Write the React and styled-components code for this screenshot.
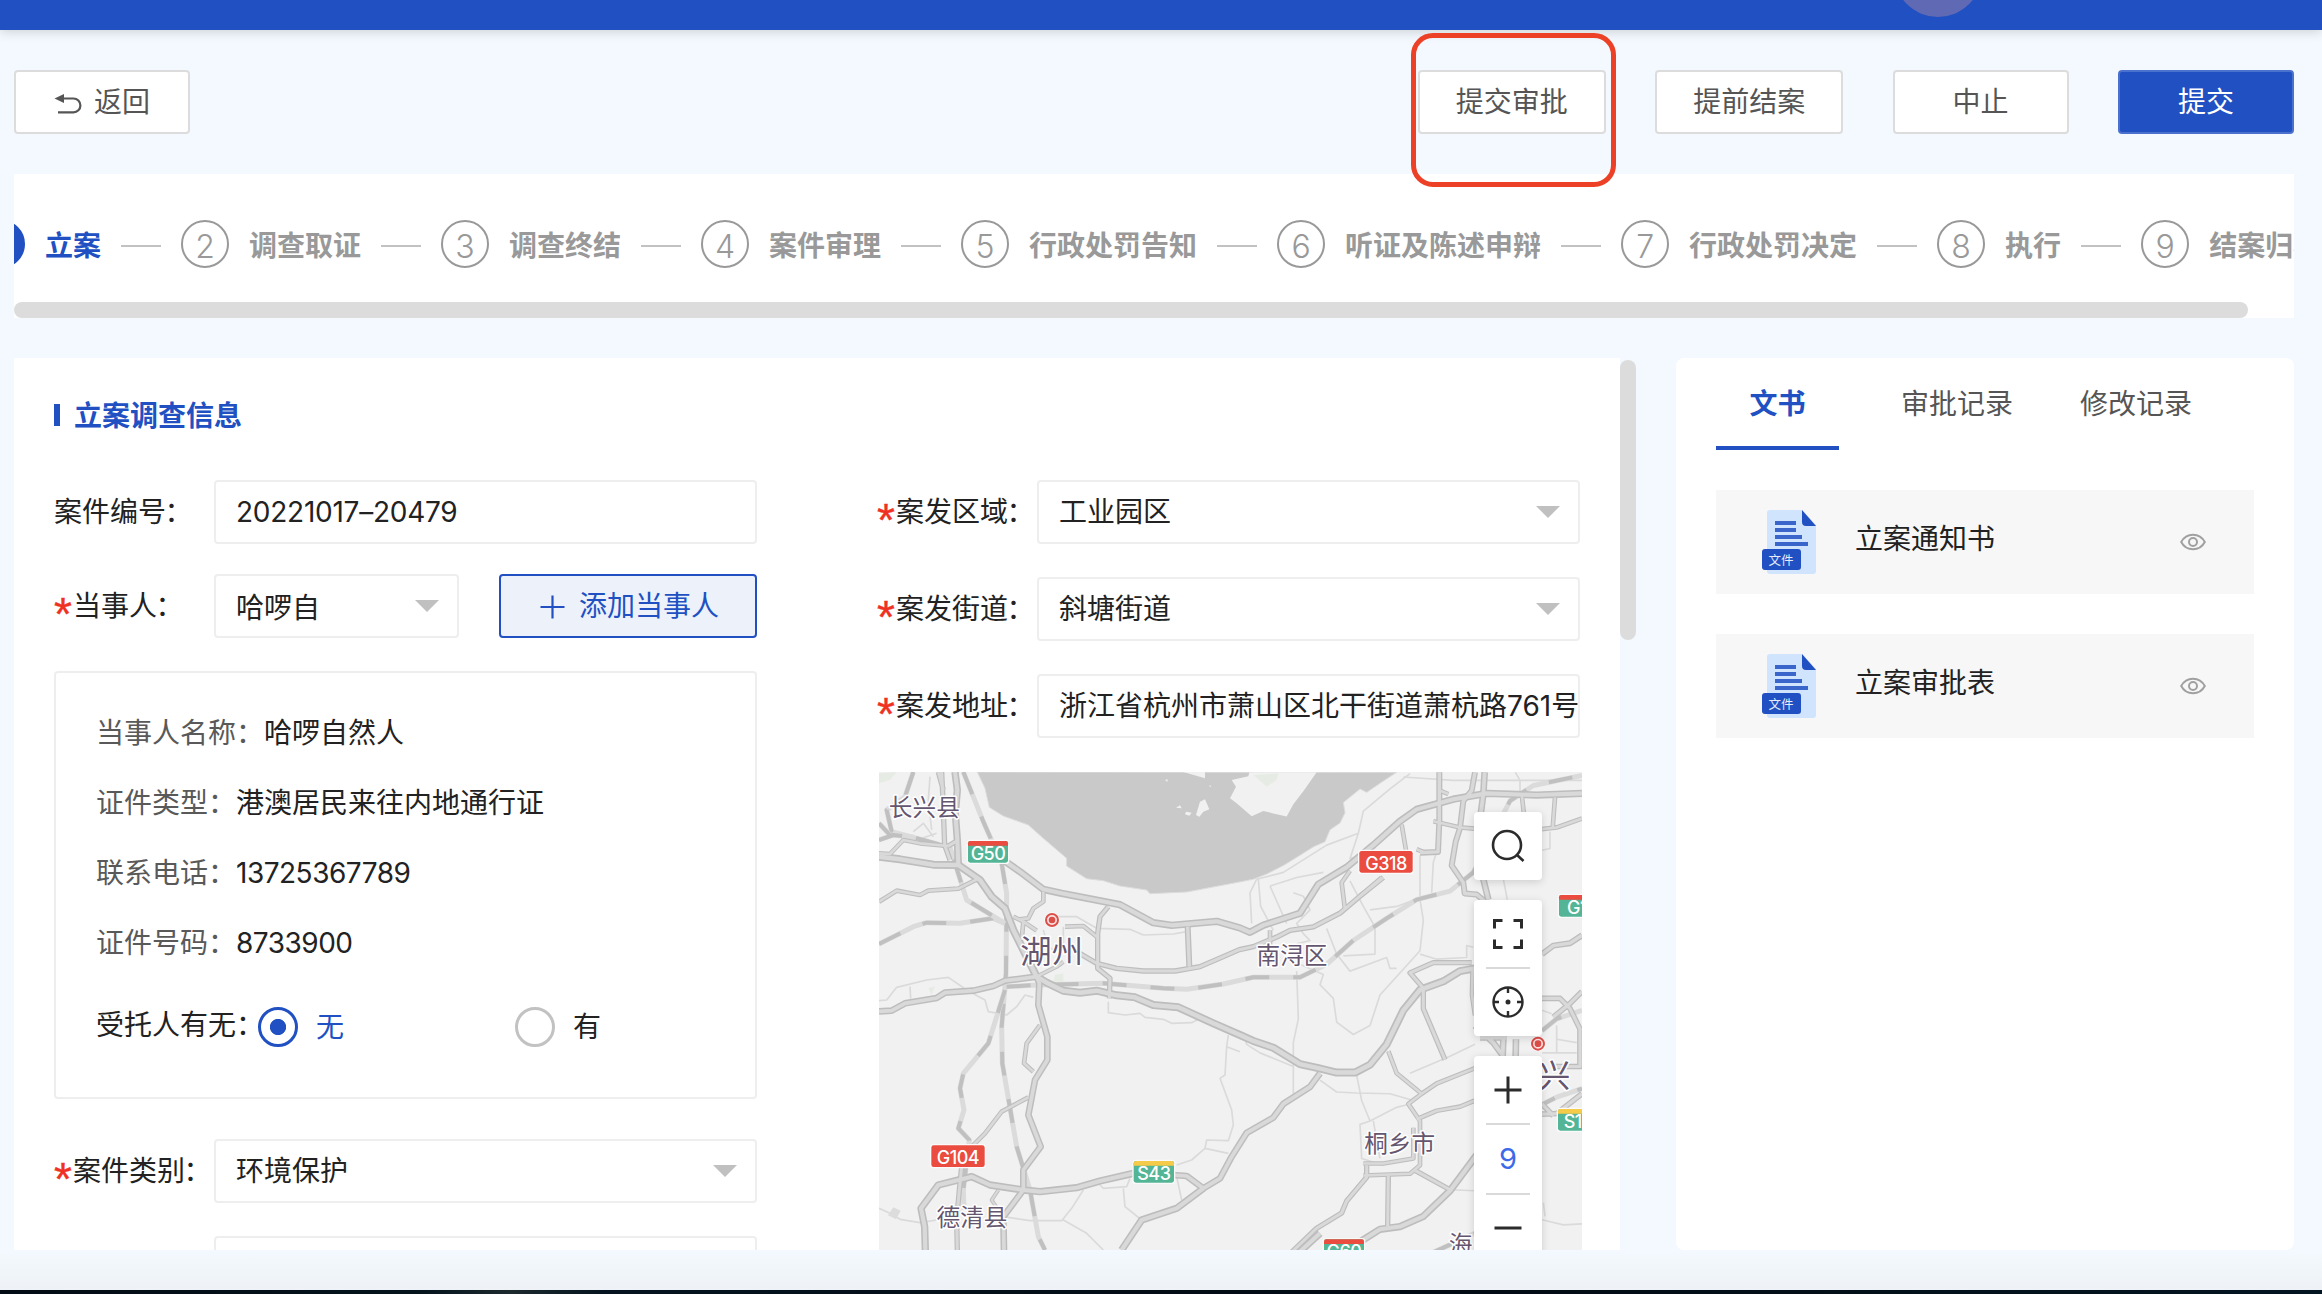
import React from "react";
import styled, { createGlobalStyle, css } from "styled-components";

const BLUE = "#2050c2";
const LINE = "#eeeeee";

const Global = createGlobalStyle`
  *, *::before { box-sizing: border-box; }
  body {
    margin: 0;
    background: #f3f9fe;
    font-family: Inter, "Noto Sans CJK SC", sans-serif;
    font-size: 28px;
    line-height: 40px;
    color: #222;
    overflow: hidden;
  }
`;

const Page = styled.div`
  display: flex;
  flex-direction: column;
  width: 2322px;
  height: 1294px;
  overflow: hidden;
`;

const TopBar = styled.header`
  flex: none;
  position: relative;
  height: 30px;
  background: ${BLUE};
  box-shadow: 0 2px 12px rgba(0, 0, 0, 0.16);
`;

const AvatarClip = styled.div`
  height: 30px;
  overflow: hidden;
  padding-left: 1894px;
`;

const Avatar = styled.div`
  width: 88px;
  height: 88px;
  margin-top: -71px;
  border-radius: 50%;
  background: #5f69b4;
`;

const Toolbar = styled.div`
  flex: none;
  display: flex;
  align-items: center;
  height: 144px;
  padding: 0 28px 0 14px;
`;

const Actions = styled.div`
  display: flex;
  gap: 49.4px;
  margin-left: auto;
`;

const Button = styled.button`
  position: relative;
  display: flex;
  align-items: center;
  justify-content: center;
  gap: 12px;
  width: ${(p) => p.$width || 176}px;
  height: 64px;
  padding: 0;
  border: 2px solid #dcdcdc;
  border-radius: 4px;
  background: #fff;
  color: #555;
  font: inherit;
  ${(p) =>
    p.$primary &&
    css`
      border-color: #4a71cd;
      background: ${BLUE};
      color: #fff;
    `}
`;

const Highlight = styled.span`
  position: absolute;
  left: -9px;
  top: -39px;
  width: 205px;
  height: 154px;
  border: 5px solid #ec4126;
  border-radius: 22px;
`;

const StepsPanel = styled.nav`
  flex: none;
  display: flex;
  flex-direction: column;
  justify-content: space-between;
  width: 2280px;
  height: 144px;
  margin-left: 14px;
  background: #fff;
  overflow: hidden;
`;

const StepTrack = styled.div`
  display: flex;
  align-items: center;
  gap: 20px;
  height: 128px;
  padding-top: 16px;
  margin-left: -37px;
`;

const StepNumber = styled.span`
  flex: none;
  width: 48px;
  height: 48px;
  margin-bottom: 4px;
  border: 2px solid ${(p) => (p.$active ? BLUE : "#999")};
  border-radius: 50%;
  background: ${(p) => (p.$active ? BLUE : "#fff")};
  color: ${(p) => (p.$active ? "#fff" : "#999")};
  font: 300 32px/49px Inter, sans-serif;
  text-align: center;
`;

const StepText = styled.span`
  flex: none;
  font-weight: 600;
  white-space: nowrap;
  color: ${(p) => (p.$active ? BLUE : "#999")};
`;

const StepLine = styled.span`
  flex: none;
  width: 40px;
  height: 2px;
  background: #c2c2c2;
`;

const HScroll = styled.div`
  width: 2234px;
  height: 16px;
  border-radius: 8px;
  background: #dcdcdc;
`;

const Main = styled.main`
  flex: none;
  display: flex;
  height: 892px;
  margin: 40px 28px 0 14px;
`;

const FormPanel = styled.section`
  width: 1606px;
  height: 892px;
  padding: 0 40px;
  background: #fff;
  overflow: hidden;
`;

const VScroll = styled.div`
  width: 16px;
  height: 280px;
  margin-top: 2px;
  border-radius: 8px;
  background: #dcdcdc;
`;

const SectionTitle = styled.h2`
  display: flex;
  align-items: center;
  gap: 14px;
  height: 40px;
  margin: 38px 0 44px;
  font-size: 28px;
  font-weight: 600;
  color: ${BLUE};
  &::before {
    content: "";
    width: 6px;
    height: 22px;
    margin-top: -2px;
    background: ${BLUE};
  }
`;

const Columns = styled.div`
  display: flex;
  justify-content: space-between;
`;

const Column = styled.div`
  display: flex;
  flex-direction: column;
  gap: ${(p) => p.$gap}px;
  width: 703px;
`;

const Field = styled.div`
  display: flex;
  align-items: center;
  height: 64px;
  flex: none;
`;

const Label = styled.label`
  display: flex;
  align-items: center;
  flex: none;
  width: 160px;
  white-space: nowrap;
`;

const Colon = styled.span`
  margin-left: -1.5px;
`;

const Star = styled.span`
  width: 19px;
  height: 40px;
  font: 46px/56px "Liberation Sans", sans-serif;
  letter-spacing: -1px;
  color: #ef3124;
  -webkit-text-stroke: 0.4px #ef3124;
`;

const Control = styled.div`
  display: flex;
  align-items: center;
  justify-content: space-between;
  width: ${(p) => p.$width || 543}px;
  height: 64px;
  padding: ${(p) => p.$drop || 0}px 18px 0 20px;
  border: 2px solid ${LINE};
  border-radius: 4px;
  background: #fff;
  white-space: nowrap;
  overflow: hidden;
  letter-spacing: ${(p) => p.$tracking || 0}px;
`;

const Caret = styled.i`
  margin-top: ${(p) => -(p.$raise || 0)}px;
  border: 12px solid transparent;
  border-top-color: #c0c0c0;
  border-bottom: 0;
`;

const AddButton = styled(Button)`
  margin-left: 40px;
  width: 258px;
  gap: 14px;
  border-color: ${BLUE};
  background: #ecf1fa;
  color: ${BLUE};
  padding: 0 0 0 3px;
`;

const PartyCard = styled.div`
  display: flex;
  flex-direction: column;
  height: 428px;
  margin: 3px 0 10px;
  padding: 25px 40px 0;
  border: 2px solid ${LINE};
  border-radius: 4px;
`;

const InfoRow = styled.div`
  display: flex;
  align-items: center;
  height: 70px;
  span {
    color: #595959;
  }
  b {
    font-weight: 400;
    letter-spacing: ${(p) => p.$tracking || 0}px;
  }
`;

const RadioRow = styled.div`
  display: flex;
  align-items: center;
  height: 40px;
  margin-top: 29px;
`;

const RadioLabel = styled.span`
  flex: none;
  width: 162px;
  padding-bottom: 4px;
  white-space: nowrap;
`;

const Radio = styled.span`
  display: flex;
  flex: none;
  align-items: center;
  gap: 18px;
  width: 257px;
  color: ${(p) => (p.$on ? BLUE : "#222")};
  &::before {
    content: "";
    width: 40px;
    height: 40px;
    border: 3px solid ${(p) => (p.$on ? BLUE : "#c2c2c2")};
    border-radius: 50%;
    background: ${(p) => (p.$on ? `radial-gradient(circle, ${BLUE} 7.7px, #fff 8.5px)` : "#fff")};
  }
`;

const LastField = styled.div`
  margin-top: 3px;
`;

const MapBox = styled.div`
  position: relative;
  flex: none;
  width: 703px;
  height: 478px;
  margin: 1px 0 0 2px;
  overflow: hidden;
  background: #f1f1f1;
  svg {
    display: block;
  }
`;

const MapTools = styled.div`
  position: absolute;
  left: 595px;
  top: 40px;
  display: flex;
  flex-direction: column;
  gap: 20px;
`;

const ToolGroup = styled.div`
  width: 68px;
  border-radius: 4px;
  background: #fff;
  box-shadow: 0 2px 8px rgba(0, 0, 0, 0.15);
`;

const Tool = styled.div`
  display: flex;
  align-items: center;
  justify-content: center;
  height: ${(p) => p.$height || 68}px;
  font-size: 29px;
  color: #3c6ae8;
`;

const ToolRule = styled.div`
  width: 44px;
  height: 2px;
  margin: -1px auto;
  background: #d9d9d9;
`;

const SidePanel = styled.aside`
  width: 618px;
  height: 892px;
  margin-left: auto;
  padding: 0 40px;
  border-radius: 8px;
  background: #fff;
`;

const Tabs = styled.div`
  display: flex;
  height: 92px;
  margin-bottom: 40px;
`;

const Tab = styled.div`
  height: 92px;
  padding: 26px 0 0;
  color: #555;
  & + & {
    margin-left: 67px;
  }
  ${(p) =>
    p.$active &&
    css`
      width: 123px;
      margin-right: -5px;
      border-bottom: 4px solid ${BLUE};
      color: ${BLUE};
      font-weight: 600;
      text-align: center;
    `}
`;

const DocItem = styled.div`
  display: flex;
  align-items: center;
  height: 104px;
  margin-bottom: 40px;
  padding: 0 48px 0 46px;
  background: #f7f7f7;
`;

const DocName = styled.span`
  flex: 1;
  margin-left: 39px;
  padding-bottom: 6px;
`;

const BottomFade = styled.div`
  flex: none;
  height: 40px;
  background: linear-gradient(#f3f9fe, #eef2f6);
`;

const BottomEdge = styled.div`
  flex: none;
  height: 4px;
  background: linear-gradient(90deg, #020b14, #04131c 18%, #1c2a2e 22%, #04131f 26%, #010a12 60%, #031521);
`;

const BackIcon = () => (
  <svg width="28" height="24" viewBox="0 0 28 24" fill="none">
    <path d="M8 8.500H19.500a6.900 6.900 0 0 1 0 13.800H4" stroke="#555" strokeWidth="2.200" />
    <path d="M0.500 8.500 10 4v9z" fill="#555" />
  </svg>
);

const PlusIcon = () => (
  <svg width="25" height="25" viewBox="0 0 25 25">
    <path d="M12.500 1.500v23M.5 13h24" stroke={BLUE} strokeWidth="2.200" />
  </svg>
);

const FileIcon = () => (
  <svg width="54" height="64" viewBox="0 0 54 64">
    <path d="M8 0H40L54 15V61a3 3 0 0 1-3 3H8a3 3 0 0 1-3-3V3a3 3 0 0 1 3-3z" fill="#d0e4fe" />
    <path d="M40 0 54 16H44a4 4 0 0 1-4-4z" fill={BLUE} />
    <path d="M13 13h21M13 20h21M13 27h27M13 34h33" stroke="#3a66cc" strokeWidth="4" />
    <rect y="39" width="39" height="21" rx="3" fill={BLUE} />
    <text x="19" y="54.500" fontSize="12.500" fill="#e4ecfb" textAnchor="middle" fontFamily="Noto Sans CJK SC">文件</text>
  </svg>
);

const EyeIcon = () => (
  <svg width="26" height="18" viewBox="0 0 26 18" fill="none" stroke="#a0a0a0" strokeWidth="2">
    <path d="M1.200 9C4 3.800 8 1.700 13 1.700S22 3.800 24.800 9C22 14.200 18 16.300 13 16.300S4 14.200 1.200 9z" />
    <circle cx="13" cy="9" r="4" />
  </svg>
);

const ToolIcon = ({ d, children, w = 2 }) => (
  <svg width="34" height="34" viewBox="0 0 34 34" fill="none" stroke="#2b2b2b" strokeWidth={w}>
    <path d={d} />
    {children}
  </svg>
);

const fitY = (x, y) => (x > 1110 ? y * 1.0216 : y);
const fit = (d) => d.replace(/(\d+) (\d+)/g, (_, x, y) => `${x} ${fitY(+x, +y).toFixed(1)}`);

/* Highways: w is the casing width, d the centre line. */
const roads = [
  { w: 24, d: "M27 290 90 298 190 314 265 315 330 360 365 410 405 445 430 510 500 650 530 668 580 692 630 698 680 692 740 706 795 712 850 735 925 742 1030 790 1110 825 1150 825 1210 845 1290 893 1345 905 1400 918 1455 918 1500 895 1550 835 1600 735 1650 675 1720 650 1770 620 1815 612" },
  { w: 22, d: "M255 36 262 90 256 160 262 240 265 315" },
  { w: 22, d: "M400 300 450 335 520 388 575 400 750 434 850 488 905 496 1040 484 1110 504 1140 506 1180 485 1290 450 1345 365 1430 315 1510 250 1590 180 1640 145 1750 115 1850 98 2000 103 2136 98" },
  { w: 20, d: "M27 754 65 752 105 730 200 714 225 698 310 692 370 678 405 662 500 650 508 670 505 735 532 830 532 900 495 960 475 1065 512 1160 460 1230 460 1290 400 1370 402 1470" },
  { w: 22, d: "M166 1470 164 1400 153 1345 205 1275 305 1250 360 1275 460 1290 510 1295 620 1283 690 1263 790 1240" },
  { w: 20, d: "M910 1245 950 1248 1000 1285 1050 1255 1085 1190 1130 1095 1210 1050 1240 1010 1320 960 1350 920" },
  { w: 22, d: "M755 1470 815 1380 920 1345 1000 1285" },
  { w: 22, d: "M1260 1470 1350 1390M1470 1415 1530 1378 1590 1370 1660 1340 1740 1265 1820 1160" },
  { w: 20, d: "M1844 36 1840 100 1832 160 1822 250 1840 350 1855 410" },
  { w: 20, d: "M1815 780 1870 830 1900 870M1830 815 1910 815M1900 820 1898 870M1938 820 1937 870" },
  { w: 16, d: "M215 36 218 100 224 255 240 300M205 36 220 90M235 258 265 240" },
  { w: 14, d: "M27 280 60 282 100 240 150 250 235 258" },
  { w: 14, d: "M27 425 80 392 150 405 175 392 265 386 325 356" },
  { w: 14, d: "M520 395 520 425 490 445 475 475 450 478 500 512M430 470 460 485 455 540M585 500 640 498 680 530" },
  { w: 16, d: "M715 440 690 470 683 520 683 625 720 655 718 715" },
  { w: 16, d: "M620 575 680 610 740 625 820 633 915 633 990 620 1060 590 1108 569 1150 548 1220 520 1260 500 1330 490 1410 450 1470 400 1540 345" },
  { w: 18, d: "M953 500 958 620" },
  { w: 13, d: "M500 650 560 620 580 605" },
  { w: 14, d: "M510 795 470 850 462 910 490 935" },
  { w: 14, d: "M475 1012 395 1055 345 1120 305 1160" },
  { w: 16, d: "M276 1210 268 1290 260 1380 262 1470" },
  { w: 12, d: "M385 1290 365 1320 385 1350" },
  { w: 18, d: "M1708 36 1708 180 1704 270 1650 272M1815 36 1805 90 1780 120 1770 200 1757 240 1745 310 1780 360 1784 392 1820 395 1850 420" },
  { w: 14, d: "M1690 180 1770 198 1830 203M2016 203 2060 198 2136 172M2055 110 2048 200M1955 100 1962 160M1595 190 1608 265M1640 262 1665 272M1535 345 1470 400M1440 325 1415 360 1425 440M1200 500 1200 545M1710 90 1735 100" },
  { w: 18, d: "M2016 570 2050 545 2100 538 2136 515" },
  { w: 17, d: "M2016 700 2070 700 2100 730 2130 790 2130 900 2050 900M2050 755 2100 715 2136 680" },
  { w: 16, d: "M1805 595 1690 595 1620 625 1660 670 1660 730 1725 880" },
  { w: 14, d: "M1555 855 1580 920 1655 980 1615 1010 1650 1060 1650 1190 1620 1215 1480 1220M1655 980 1700 950 1815 905M1630 1080 1630 1170 1540 1185 1480 1185M1640 1055 1700 1030 1770 1018 1815 1000" },
  { w: 16, d: "M1490 1190 1490 1225 1430 1295 1415 1330 1340 1375 1260 1450M1555 1220 1553 1370M1635 1205 1740 1262" },
  { w: 14, d: "M1808 610 1806 690 1815 750" },
  { w: 17, d: "M2016 1040 2060 1038 2136 980M2016 1010 2050 1045" },
];

const rails = [
  "M280 36 340 185 395 310 410 400 408 640 395 800 397 910 440 1160 480 1290 505 1430 525 1470",
  "M27 552 130 500 170 488 270 490 370 475 405 490",
  "M130 36 105 110 50 150 65 215 130 232 240 262 290 420 405 490",
  "M405 690 355 850 280 940 270 985 282 1050 265 1105 298 1140 280 1290 282 1350",
  "M410 680 500 675 700 670 880 685 950 688 1060 672 1150 638 1290 638 1370 600 1450 530 1550 465 1640 410 1740 385 1810 330 1920 120 1990 75 2136 45",
  "M2016 795 2060 760 2136 735M1990 1025 2060 990 2136 965M27 240 70 225 130 232M27 190 60 225M1680 1450 1815 1390",
];

const lanes = [
  "M27 722 50 720 80 682 170 660 235 652 290 690 345 720 355 755 410 765 440 740 465 705 490 712",
  "M120 680 122 716M130 215 160 190 190 230M180 50 175 120 185 210M140 240 200 220",
  "M545 470 620 470 680 505 780 508 820 525 910 522 950 515M520 510 535 560 560 575M580 500 580 570 620 565",
  "M715 725 715 758 765 765 810 760 825 772 880 778 905 790 965 788 1000 770",
  "M1075 825 1070 860 1110 875M1070 860 1065 945 1050 955 1085 1050 1090 1095 1075 1142 1010 1140 1005 1165 965 1200 920 1215M1005 1165 1075 1180",
  "M640 1290 605 1345 575 1382 480 1382 400 1370M580 1380 650 1420 700 1470M760 1285 765 1340 815 1380M920 1250 935 1320M690 1275 700 1285 770 1280 780 1255",
  "M27 1345 60 1360 90 1378 150 1388 200 1380",
  "M1620 40 1560 85 1480 150 1465 215 1440 290 1500 270M1465 215 1370 250 1240 330 1160 350 1140 390 1145 480M1165 350 1172 430 1210 500M1200 370 1250 480M1200 370 1280 345 1360 330",
  "M1270 390 1300 400 1320 440 1280 480 1300 510 1320 530 1280 540M1440 355 1480 430 1515 490 1515 570 1420 575M1650 410 1660 470 1650 560 1530 690 1500 780 1450 806 1400 770 1390 700 1350 660 1360 630 1290 600M1500 440 1580 430 1650 405M1370 495 1400 570 1440 620 1550 580 1560 612 1580 612M1650 570 1700 585 1790 580 1790 545 1810 550",
  "M1700 270 1690 300 1685 390M1650 280 1650 400M1280 620 1285 760 1270 830 1270 980M1120 800 1130 835 1170 860 1270 900",
  "M1460 925 1475 1000 1500 1060 1580 1020 1620 1010M1500 1060 1470 1070 1475 1170 1540 1190M1510 1060 1530 1170M1620 920 1740 870 1815 835M1740 1262 1815 1265M2016 1350 2080 1365 2136 1362",
  "M1350 940 1400 975 1460 978 1560 980 1630 1000",
  "M1600 50 1750 60 2136 60M1936 36 1950 60 1950 100M2040 210 2040 260 2016 265M1900 350 1912 410M2060 780 2060 860 2120 860M2016 735 2045 745M2060 820 2120 830M2016 860 2110 860M2020 1300 2025 1340",
];

const lake =
  "M322 36 345 85 358 142 400 168 475 195 520 235 590 295 590 318 650 356 700 362 750 378 830 390 840 401 950 396 1108 366 1150 350 1190 335 1240 310 1290 280 1330 255 1365 240 1380 205 1410 185 1425 155 1420 125 1470 85 1490 95 1535 65 1580 36z";
const islands = [
  "M1138 36 1135 48 1085 60 1098 80 1080 115 1100 130 1145 165 1180 150 1250 166 1270 130 1300 92 1340 36z",
  "M978 165 990 125 1005 118 1018 148 1000 155 988 170z",
  "M918 143 930 136 935 145zM948 155 965 158 958 167 945 163zM885 60 893 58 892 66zM940 36 1005 36 1005 55zM1018 76 1024 78 1020 82z",
];

const places = [
  { x: 163, y: 169, s: 71, t: "长兴县" },
  { x: 545, y: 609, s: 94, t: "湖州" },
  { x: 306, y: 1399, s: 71, t: "德清县" },
  { x: 1266, y: 613, s: 71, t: "南浔区" },
  { x: 1589, y: 1176, s: 71, t: "桐乡市" },
  { x: 1772, y: 1478, s: 71, t: "海" },
  { x: 2054, y: 981, s: 94, t: "兴" },
];

const shields = [
  { x: 294, y: 243, w: 120, t: "G50", top: "#ea4c40" },
  { x: 184, y: 1156, w: 160, t: "G104" },
  { x: 1468, y: 273, w: 160, t: "G318" },
  { x: 791, y: 1203, w: 121, t: "S43", top: "#f6cb49" },
  { x: 2067, y: 405, w: 140, t: "G15", top: "#ea4c40" },
  { x: 2064, y: 1047, w: 120, t: "S12", top: "#f6cb49" },
  { x: 1362, y: 1438, w: 120, t: "G60", top: "#ea4c40" },
];

const Pin = ({ x, y }) => (
  <g>
    <circle cx={x} cy={y} r="23" fill="#fff" opacity=".7" />
    <circle cx={x} cy={y} r="18" fill="#fbe3e1" stroke="#db4f4a" strokeWidth="6" />
    <circle cx={x} cy={y} r="10" fill="#db4f4a" />
  </g>
);

const MapDrawing = () => (
  <svg width="703" height="478" viewBox="27 36 2109 1434" fill="none" strokeLinejoin="round">
    <path d={fit(lake)} fill="#c9c9c9" stroke="#dcdcdc" strokeWidth="3" />
    {islands.map((d) => <path key={d} d={fit(d)} fill="#f1f1f1" />)}
    <path d="M27 40 80 36 60 60 27 70zM555 645 580 640 580 665 550 665zM175 685 195 678 185 705zM1150 45 1225 40 1220 60 1190 80z" fill="#e6ece4" />
    {lanes.map((d) => <path key={d} d={fit(d)} stroke="#dadada" strokeWidth="5" />)}
    {rails.map((d) => (
      <g key={d}>
        <path d={fit(d)} stroke="#dbdbdb" strokeWidth="15" />
        <path d={fit(d)} stroke="#c0c0c0" strokeWidth="12" strokeDasharray="72 72" />
      </g>
    ))}
    {roads.map((r) => <path key={r.d} d={fit(r.d)} stroke="#bdbdbd" strokeWidth={r.w} />)}
    {roads.map((r) => <path key={r.d} d={fit(r.d)} stroke="#d9d9d9" strokeWidth={r.w * 0.56} />)}
    <path d="M70 1342 92 1352 78 1378 54 1366z" fill="#dcdcdc" />
    {shields.map((s) => (
      <g key={s.t}>
        <rect x={s.x - 4} y={s.y - 4} width={s.w + 8} height="73" rx="10" fill="#fafafa" />
        <rect x={s.x} y={s.y} width={s.w} height="65" rx="7" fill={s.top ? "#53b596" : "#ea4c40"} />
        {s.top && <path d={`M${s.x} ${s.y + 14}v-7q0-7 7-7h${s.w - 14}q7 0 7 7v7z`} fill={s.top} />}
        <text x={s.x + s.w / 2} y={s.y + 57} fontSize="54" fontFamily="Inter" fontWeight="500" letterSpacing="-1.500" textAnchor="middle" fill="#fff">{s.t}</text>
      </g>
    ))}
    <Pin x={546} y={480} />
    <Pin x={2004} y={851} />
    {places.map((p) => (
      <text key={p.t} x={p.x} y={p.y} fontSize={p.s} fontFamily="Noto Sans CJK SC" textAnchor="middle" fill="#65566f" stroke="#fff" strokeWidth="9" paintOrder="stroke">{p.t}</text>
    ))}
  </svg>
);

const steps = ["立案", "调查取证", "调查终结", "案件审理", "行政处罚告知", "听证及陈述申辩", "行政处罚决定", "执行", "结案归档"];

const party = [
  ["当事人名称：", "哈啰自然人"],
  ["证件类型：", "港澳居民来往内地通行证"],
  ["联系电话：", "13725367789"],
  ["证件号码：", "8733900"],
];

const FormField = ({ label, required, value, select, tracking }) => (
  <Field>
    <Label>
      {required && <Star>*</Star>}
      {label}
      {label && <Colon>：</Colon>}
    </Label>
    <Control $tracking={tracking}>
      {value}
      {select && <Caret />}
    </Control>
  </Field>
);

export default function App() {
  return (
    <Page>
      <Global />
      <TopBar>
        <AvatarClip>
          <Avatar />
        </AvatarClip>
      </TopBar>
      <Toolbar>
        <Button>
          <BackIcon />
          返回
        </Button>
        <Actions>
          <Button $width={188}>
            提交审批
            <Highlight />
          </Button>
          <Button $width={188}>提前结案</Button>
          <Button>中止</Button>
          <Button $primary>提交</Button>
        </Actions>
      </Toolbar>
      <StepsPanel>
        <StepTrack>
          {steps.map((name, i) => (
            <React.Fragment key={name}>
              {i > 0 && <StepLine />}
              <StepNumber $active={i === 0}>{i + 1}</StepNumber>
              <StepText $active={i === 0}>{name}</StepText>
            </React.Fragment>
          ))}
        </StepTrack>
        <HScroll />
      </StepsPanel>
      <Main>
        <FormPanel>
          <SectionTitle>立案调查信息</SectionTitle>
          <Columns>
            <Column $gap={30}>
              <FormField label="案件编号" value="20221017–20479" tracking={-0.25} />
              <Field>
                <Label>
                  <Star>*</Star>当事人<Colon>：</Colon>
                </Label>
                <Control $width={245} $drop={3}>
                  哈啰自
                  <Caret $raise={3} />
                </Control>
                <AddButton>
                  <PlusIcon />
                  添加当事人
                </AddButton>
              </Field>
              <PartyCard>
                {party.map(([name, value]) => (
                  <InfoRow key={name} $tracking={/^\d/.test(value) ? -0.5 : 0}>
                    <span>{name}</span>
                    <b>{value}</b>
                  </InfoRow>
                ))}
                <RadioRow>
                  <RadioLabel>受托人有无：</RadioLabel>
                  <Radio $on>无</Radio>
                  <Radio>有</Radio>
                </RadioRow>
              </PartyCard>
              <FormField label="案件类别" required value="环境保护" select />
              <LastField>
                <FormField label="" value="" />
              </LastField>
            </Column>
            <Column $gap={33}>
              <FormField label="案发区域" required value="工业园区" select />
              <FormField label="案发街道" required value="斜塘街道" select />
              <FormField label="案发地址" required value="浙江省杭州市萧山区北干街道萧杭路761号" />
              <MapBox>
                <MapDrawing />
                <MapTools>
                  <ToolGroup>
                    <Tool>
                      <ToolIcon d="M25.500 25.500 32.500 32" w={2.600}>
                        <circle cx="16" cy="16" r="14" />
                      </ToolIcon>
                    </Tool>
                  </ToolGroup>
                  <ToolGroup>
                    <Tool>
                      <ToolIcon w={3} d="M3.500 11.500v-8h8M22.500 3.500h8v8M30.500 22.500v8h-8M11.500 30.500h-8v-8" />
                    </Tool>
                    <ToolRule />
                    <Tool>
                      <ToolIcon w={2.400} d="M17 2v6M17 26v6M2 17h6M26 17h6">
                        <circle cx="17" cy="17" r="14.500" />
                        <circle cx="17" cy="17" r="1.300" />
                      </ToolIcon>
                    </Tool>
                  </ToolGroup>
                  <ToolGroup>
                    <Tool>
                      <ToolIcon w={3} d="M17 3.500v27M3.500 17h27" />
                    </Tool>
                    <ToolRule />
                    <Tool $height={70}>9</Tool>
                    <ToolRule />
                    <Tool>
                      <ToolIcon w={3} d="M3.500 17h27" />
                    </Tool>
                  </ToolGroup>
                </MapTools>
              </MapBox>
            </Column>
          </Columns>
        </FormPanel>
        <VScroll />
        <SidePanel>
          <Tabs>
            <Tab $active>文书</Tab>
            <Tab>审批记录</Tab>
            <Tab>修改记录</Tab>
          </Tabs>
          {["立案通知书", "立案审批表"].map((name) => (
            <DocItem key={name}>
              <FileIcon />
              <DocName>{name}</DocName>
              <EyeIcon />
            </DocItem>
          ))}
        </SidePanel>
      </Main>
      <BottomFade />
      <BottomEdge />
    </Page>
  );
}
